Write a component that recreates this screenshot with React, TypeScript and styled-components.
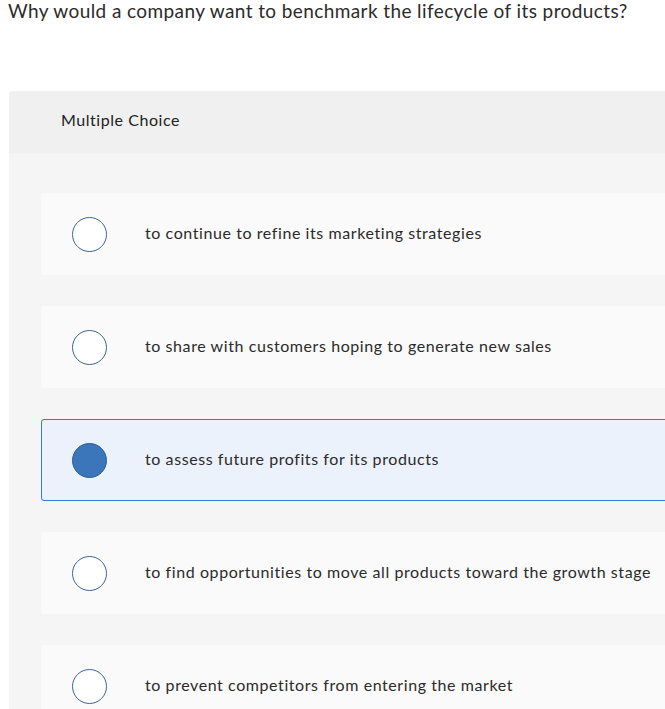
import React from "react";
import styled, { createGlobalStyle } from "styled-components";

const GlobalStyle = createGlobalStyle`
  html {
    overflow: hidden;
  }
  body {
    margin: 0;
    background: #ffffff;
    font-family: Lato, "Liberation Sans", sans-serif;
    color: #333333;
  }
`;

const Page = styled.main`
  padding: 1px 0 0 8px;
  overflow: hidden;
`;

const Question = styled.p`
  margin: 0;
  font-size: 19px;
  line-height: 20px;
  letter-spacing: 0.4px;
  color: #2b2b2b;
`;

const Panel = styled.section`
  margin-top: 70px;
  margin-left: 1px;
  width: calc(100% + 40px);
  background: #f5f5f5;
  border-radius: 4px 4px 0 0;
`;

const PanelHeader = styled.div`
  height: 62px;
  display: flex;
  align-items: center;
  padding: 0 0 5px 52px;
  box-sizing: border-box;
  background: #f0f0f0;
  border-radius: 4px 4px 0 0;
  font-size: 16px;
  letter-spacing: 0.55px;
  color: #222222;
`;

const OptionList = styled.div`
  display: flex;
  flex-direction: column;
  gap: 31px;
  padding: 40px 0 40px 32px;
`;

const Option = styled.label<{ $selected?: boolean }>`
  display: flex;
  align-items: center;
  height: 82px;
  box-sizing: border-box;
  padding-left: ${(p) => (p.$selected ? 30 : 31)}px;
  background: ${(p) => (p.$selected ? "#ebf2fb" : "#fafafa")};
  border: ${(p) => (p.$selected ? "1px solid #3a7bce" : "none")};
  border-radius: 3px;
  cursor: pointer;
`;

const Radio = styled.span<{ $checked?: boolean }>`
  flex: none;
  width: 35px;
  height: 35px;
  box-sizing: border-box;
  border-radius: 50%;
  border: 1.4px solid ${(p) => (p.$checked ? "#2d5f97" : "#3a6594")};
  background: ${(p) => (p.$checked ? "#3a76b9" : "#ffffff")};
`;

const OptionText = styled.span`
  margin-left: 38px;
  padding-bottom: 4px;
  font-size: 16px;
  letter-spacing: 0.58px;
  color: #2b2b2b;
`;

const options = [
  "to continue to refine its marketing strategies",
  "to share with customers hoping to generate new sales",
  "to assess future profits for its products",
  "to find opportunities to move all products toward the growth stage",
  "to prevent competitors from entering the market",
];

export default function App() {
  const selected = 2;
  return (
    <Page>
      <GlobalStyle />
      <Question>
        Why would a company want to benchmark the lifecycle of its products?
      </Question>
      <Panel>
        <PanelHeader>Multiple Choice</PanelHeader>
        <OptionList>
          {options.map((text, i) => (
            <Option key={text} $selected={i === selected}>
              <Radio $checked={i === selected} />
              <OptionText>{text}</OptionText>
            </Option>
          ))}
        </OptionList>
      </Panel>
    </Page>
  );
}
